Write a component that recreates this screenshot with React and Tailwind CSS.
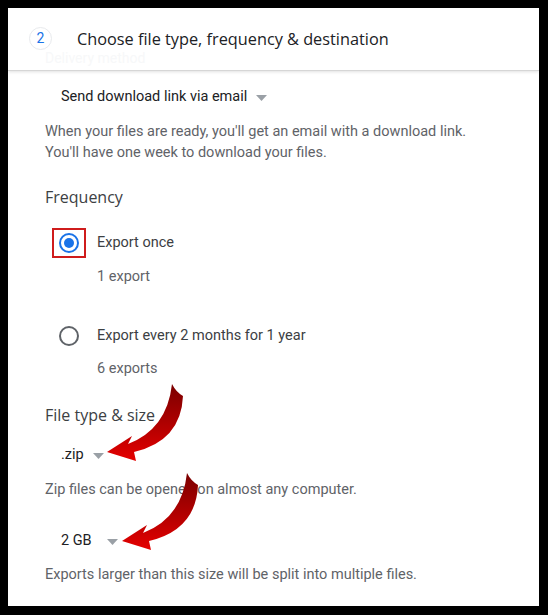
import React from 'react';

const Caret = () => (
  <svg width="11" height="6" viewBox="0 0 11 6" className="ml-[9px] mt-[1px]">
    <path d="M0 0 L11 0 L5.5 6 Z" fill="#9aa0a6" />
  </svg>
);

const Radio = ({ checked, boxed }) => (
  <div
    className={`flex h-[30px] w-[34px] items-center justify-center border-2 ${
      boxed ? 'border-[#cf1c1c]' : 'border-transparent'
    }`}
  >
    <div
      className={`flex h-[20px] w-[20px] items-center justify-center rounded-full border-2 ${
        checked ? 'border-[#1a73e8]' : 'border-[#5f6368]'
      }`}
    >
      {checked && <div className="h-[10px] w-[10px] rounded-full bg-[#1a73e8]" />}
    </div>
  </div>
);

const Arrow = ({ dx, dy }) => (
  <path
    transform={`translate(${dx} ${dy})`}
    d="M107 452 L132 436 L128 444 Q167 429 172 384 Q176 392 183 396 Q181 441 134 452 L136 461 Z"
    fill="url(#arrowGrad)"
  />
);

export default function App() {
  return (
    <div className="relative h-[615px] w-[548px] bg-black pl-[8px] pt-[8px]" style={{ fontFamily: 'Roboto, "Liberation Sans", sans-serif' }}>
      <div className="h-[598px] w-[531px] overflow-hidden bg-white">
        <div className="relative h-[63px] border-b border-[#d6d6d6] shadow-[0_1px_3px_rgba(0,0,0,0.12)]">
          <div className="flex items-center pl-[21px] pt-[19px]">
            <div className="flex h-[23px] w-[23px] items-center justify-center rounded-full border border-[#e8eaed] text-[14px] text-[#1a73e8]">
              2
            </div>
            <div className="ml-[25px] text-[16.3px] leading-[22px] text-[#202124]" style={{ fontFamily: '"Open Sans", Roboto, sans-serif' }}>
              Choose file type, frequency &amp; destination
            </div>
          </div>
          <div className="pl-[37px] pt-[1px] text-[14px] leading-[14px] text-[#f7f8f9]">Delivery method</div>
        </div>

        <div className="pl-[37px] text-[14.5px]">
          <div className="mt-[16px] flex h-[20px] items-center pl-[16px] text-[#202124]">
            Send download link via email
            <Caret />
          </div>
          <p className="mt-[14px] leading-[21px] text-[#5f6368]">
            When your files are ready, you'll get an email with a download link.
            <br />
            You'll have one week to download your files.
          </p>

          <h3 className="mt-[22px] text-[16px] font-medium leading-[24px] text-[#3c4043]" style={{ fontFamily: '"Open Sans", Roboto, sans-serif' }}>
            Frequency
          </h3>

          <div className="mt-[19px] flex items-center pl-[7px]">
            <Radio checked boxed />
            <span className="ml-[11px] text-[#3c4043]">Export once</span>
          </div>
          <div className="mt-[9px] pl-[52px] leading-[20px] text-[#5f6368]">1 export</div>

          <div className="mt-[34px] flex items-center pl-[7px]">
            <Radio />
            <span className="ml-[11px] text-[#3c4043]">Export every 2 months for 1 year</span>
          </div>
          <div className="mt-[8px] pl-[52px] leading-[20px] text-[#5f6368]">6 exports</div>

          <h3 className="mt-[24px] text-[16px] font-medium leading-[24px] text-[#3c4043]" style={{ fontFamily: '"Open Sans", Roboto, sans-serif' }}>
            File type &amp; size
          </h3>

          <div className="mt-[18px] flex h-[20px] items-center pl-[16px] text-[#202124]">
            .zip
            <Caret />
          </div>
          <p className="mt-[15px] leading-[20px] text-[#5f6368]">
            Zip files can be opened on almost any computer.
          </p>

          <div className="mt-[31px] flex h-[20px] items-center pl-[16px] text-[#202124]">
            2 GB
            <span className="ml-[6px] flex"><Caret /></span>
          </div>
          <p className="mt-[14px] leading-[20px] text-[#5f6368]">
            Exports larger than this size will be split into multiple files.
          </p>
        </div>
      </div>

      <svg className="pointer-events-none absolute left-0 top-0" width="548" height="615">
        <defs>
          <linearGradient id="arrowGrad" x1="0" y1="0" x2="0" y2="1">
            <stop offset="0" stopColor="#7a0000" />
            <stop offset="0.6" stopColor="#b80000" />
            <stop offset="1" stopColor="#e60000" />
          </linearGradient>
        </defs>
        <Arrow dx={0} dy={0} />
        <Arrow dx={15} dy={89} />
      </svg>
    </div>
  );
}
